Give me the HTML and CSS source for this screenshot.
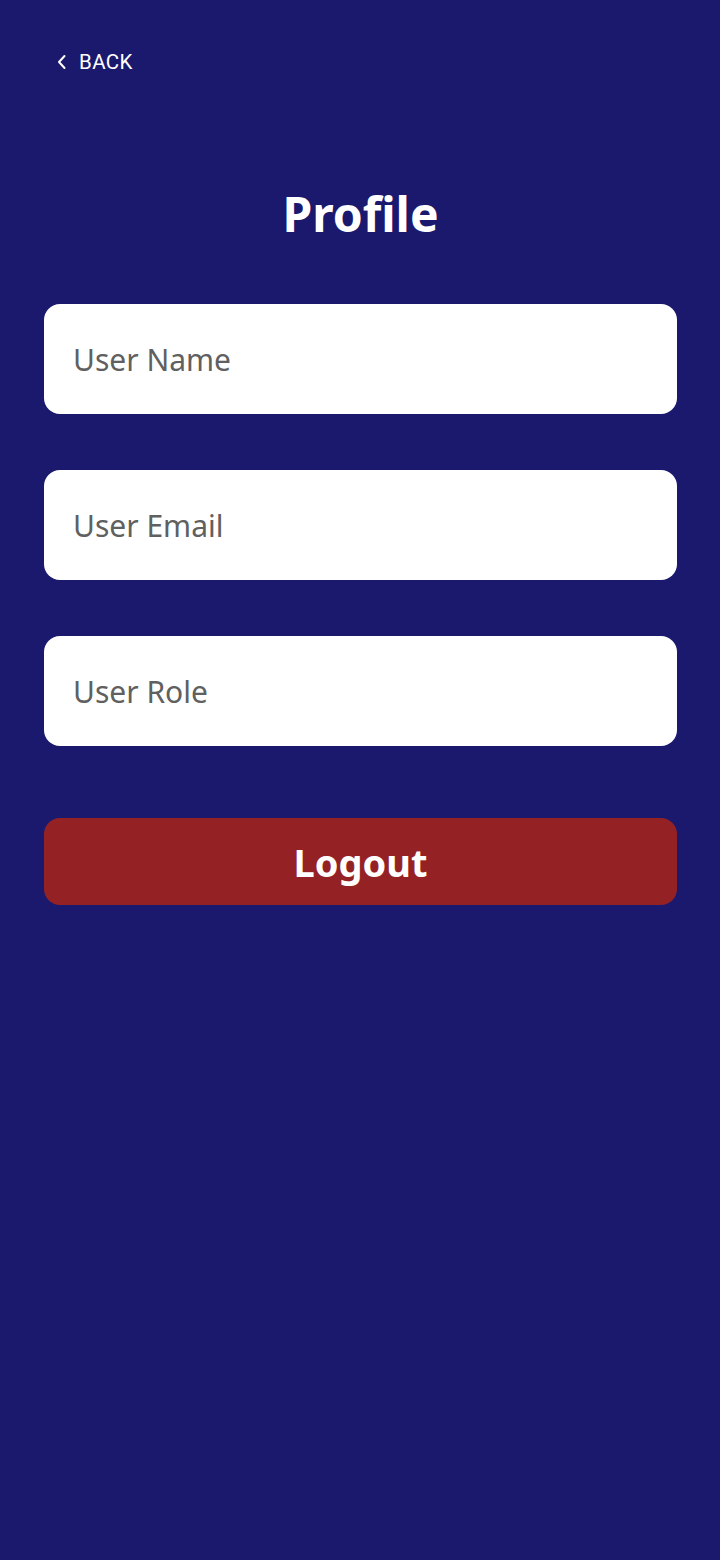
FILE: index.html
```html
<!DOCTYPE html>
<html>
<head>
<meta charset="utf-8">
<link rel="stylesheet" href="styles.css">
</head>
<body>
<div class="screen">
  <header class="topbar">
    <a class="back" href="#">
      <svg class="chev" width="10" height="16" viewBox="0 0 10 16"><path d="M7.5 2 L2 8 L7.5 14" fill="none" stroke="#fff" stroke-width="2" stroke-linecap="round" stroke-linejoin="round"/></svg>
      <span>BACK</span>
    </a>
  </header>
  <h1 class="title">Profile</h1>
  <form class="form">
    <input class="field" type="text" placeholder="User Name">
    <input class="field" type="text" placeholder="User Email">
    <input class="field" type="text" placeholder="User Role">
    <button class="logout" type="button">Logout</button>
  </form>
</div>
</body>
</html>
```
FILE: styles.css
```css
html, body {
  margin: 0;
  padding: 0;
  background: #1a196e;
  width: 720px;
  height: 1560px;
}
.screen {
  display: flex;
  flex-direction: column;
  padding: 0 43px 0 44px;
}
.topbar {
  display: flex;
  align-items: center;
  height: 124px;
}
.back {
  display: flex;
  align-items: center;
  gap: 12px;
  margin-left: 13px;
  color: #fff;
  text-decoration: none;
  font-family: Roboto, "Liberation Sans", sans-serif;
  font-size: 20.5px;
  letter-spacing: 0.4px;
}
.chev { display: block; }
.title {
  margin: 40px 0 0 0;
  text-align: center;
  color: #fff;
  font-family: "Noto Sans", "Open Sans", sans-serif;
  font-weight: 700;
  font-size: 48px;
  line-height: 100px;
  height: 100px;
}
.form {
  display: flex;
  flex-direction: column;
  gap: 56px;
  margin-top: 40px;
}
.field {
  box-sizing: border-box;
  height: 110px;
  width: 100%;
  border: none;
  border-radius: 16px;
  background: #fff;
  padding: 0 28px 0 29px;
  font-family: "Noto Sans", "Open Sans", sans-serif;
  font-size: 30px;
  color: #333;
  outline: none;
}
.field::placeholder {
  color: #606060;
}
.logout {
  height: 87px;
  margin-top: 16px;
  border: none;
  border-radius: 16px;
  background: #942224;
  color: #fff;
  font-family: "Noto Sans", "Open Sans", sans-serif;
  font-weight: 700;
  font-size: 38px;
  padding: 0;
}
```
